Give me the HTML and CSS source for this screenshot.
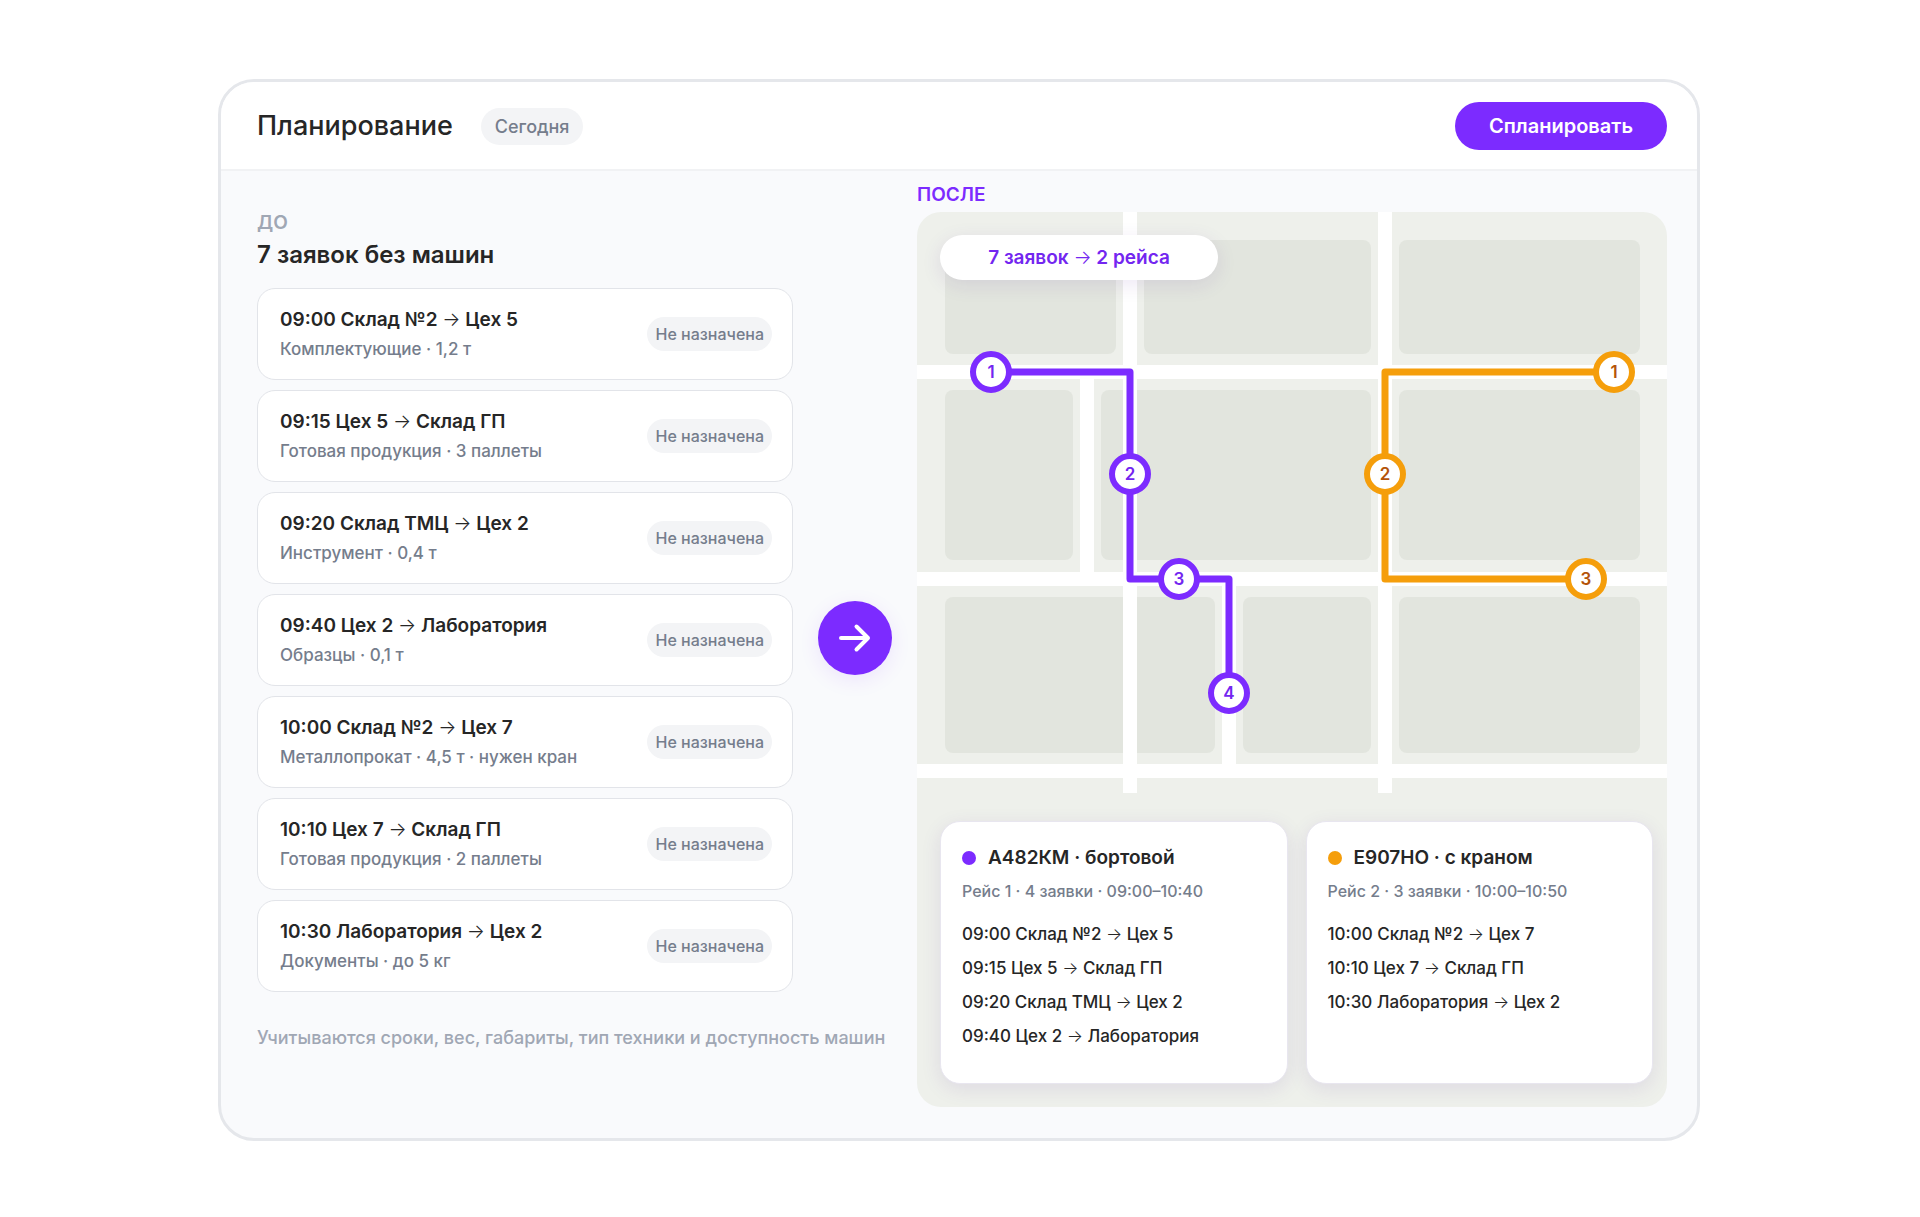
FILE: index.html
```html
<!DOCTYPE html>
<html lang="ru">
<head>
<meta charset="utf-8">
<meta name="viewport" content="width=device-width, initial-scale=1">
<title>Планирование</title>
<link rel="stylesheet" href="styles.css">
</head>
<body>
<main class="planner">
  <header class="planner-header">
    <h1 class="planner-title">Планирование</h1>
    <span class="day">Сегодня</span>
    <button class="plan-button" type="button">Спланировать</button>
  </header>

  <div class="planner-body">
    <section class="before">
      <div class="before-head">
        <p class="label">ДО</p>
        <h2 class="before-title">7 заявок без машин</h2>
      </div>
      <ul class="requests">
        <li class="request">
          <div class="request-info">
            <h3 class="request-title">09:00 Склад №2 <span class="arrow">→</span> Цех 5</h3>
            <p class="request-meta">Комплектующие · 1,2 т</p>
          </div>
          <span class="status">Не назначена</span>
        </li>
        <li class="request">
          <div class="request-info">
            <h3 class="request-title">09:15 Цех 5 <span class="arrow">→</span> Склад ГП</h3>
            <p class="request-meta">Готовая продукция · 3 паллеты</p>
          </div>
          <span class="status">Не назначена</span>
        </li>
        <li class="request">
          <div class="request-info">
            <h3 class="request-title">09:20 Склад ТМЦ <span class="arrow">→</span> Цех 2</h3>
            <p class="request-meta">Инструмент · 0,4 т</p>
          </div>
          <span class="status">Не назначена</span>
        </li>
        <li class="request">
          <div class="request-info">
            <h3 class="request-title">09:40 Цех 2 <span class="arrow">→</span> Лаборатория</h3>
            <p class="request-meta">Образцы · 0,1 т</p>
          </div>
          <span class="status">Не назначена</span>
        </li>
        <li class="request">
          <div class="request-info">
            <h3 class="request-title">10:00 Склад №2 <span class="arrow">→</span> Цех 7</h3>
            <p class="request-meta">Металлопрокат · 4,5 т · нужен кран</p>
          </div>
          <span class="status">Не назначена</span>
        </li>
        <li class="request">
          <div class="request-info">
            <h3 class="request-title">10:10 Цех 7 <span class="arrow">→</span> Склад ГП</h3>
            <p class="request-meta">Готовая продукция · 2 паллеты</p>
          </div>
          <span class="status">Не назначена</span>
        </li>
        <li class="request">
          <div class="request-info">
            <h3 class="request-title">10:30 Лаборатория <span class="arrow">→</span> Цех 2</h3>
            <p class="request-meta">Документы · до 5 кг</p>
          </div>
          <span class="status">Не назначена</span>
        </li>
      </ul>
      <div class="transition">
        <svg width="38" height="38" viewBox="0 0 38 38" fill="none" stroke="#fff" stroke-width="4" stroke-linecap="round" stroke-linejoin="round" aria-hidden="true">
          <path d="M5 19H32M20.500 7.500L32 19L20.500 30.500"/>
        </svg>
      </div>
      <p class="note">Учитываются сроки, вес, габариты, тип техники и доступность машин</p>
    </section>

    <section class="after">
      <p class="label label-accent">ПОСЛЕ</p>
      <div class="map">
        <svg class="map-canvas" viewBox="0 0 750 581" role="img" aria-label="Карта рейсов">
          <g fill="#e2e5de">
            <rect x="28" y="28" width="171" height="114" rx="8"/>
            <rect x="227" y="28" width="227" height="114" rx="8"/>
            <rect x="482" y="28" width="241" height="114" rx="8"/>
            <rect x="28" y="178" width="128" height="170" rx="8"/>
            <rect x="184" y="178" width="270" height="170" rx="8"/>
            <rect x="482" y="178" width="241" height="170" rx="8"/>
            <rect x="28" y="385" width="270" height="156" rx="8"/>
            <rect x="326" y="385" width="128" height="156" rx="8"/>
            <rect x="482" y="385" width="241" height="156" rx="8"/>
          </g>
          <g stroke="#fff" stroke-width="14">
            <path d="M0 160H750M0 367H750M0 559H750"/>
            <path d="M213 0V581M468 0V581M170 160V367M312 367V559"/>
          </g>
          <g fill="none" stroke-width="7" stroke-linejoin="round">
            <path stroke="#7c2bff" d="M74 160H213V367H312V481"/>
            <path stroke="#f59e0b" d="M697 160H468V367H669"/>
          </g>
          <g class="pins pins-violet">
            <circle cx="74" cy="160" r="18"/><text x="74" y="166">1</text>
            <circle cx="213" cy="262" r="18"/><text x="213" y="268">2</text>
            <circle cx="262" cy="367" r="18"/><text x="262" y="373">3</text>
            <circle cx="312" cy="481" r="18"/><text x="312" y="487">4</text>
          </g>
          <g class="pins pins-amber">
            <circle cx="697" cy="160" r="18"/><text x="697" y="166">1</text>
            <circle cx="468" cy="262" r="18"/><text x="468" y="268">2</text>
            <circle cx="669" cy="367" r="18"/><text x="669" y="373">3</text>
          </g>
        </svg>
        <p class="summary">7 заявок <span class="arrow">→</span> 2 рейса</p>
        <div class="trips">
          <article class="trip">
            <h3 class="trip-title"><span class="dot dot-violet"></span>А482КМ · бортовой</h3>
            <p class="trip-meta">Рейс 1 · 4 заявки · 09:00–10:40</p>
            <ul class="stops">
              <li>09:00 Склад №2 <span class="arrow">→</span> Цех 5</li>
              <li>09:15 Цех 5 <span class="arrow">→</span> Склад ГП</li>
              <li>09:20 Склад ТМЦ <span class="arrow">→</span> Цех 2</li>
              <li>09:40 Цех 2 <span class="arrow">→</span> Лаборатория</li>
            </ul>
          </article>
          <article class="trip">
            <h3 class="trip-title"><span class="dot dot-amber"></span>Е907НО · с краном</h3>
            <p class="trip-meta">Рейс 2 · 3 заявки · 10:00–10:50</p>
            <ul class="stops">
              <li>10:00 Склад №2 <span class="arrow">→</span> Цех 7</li>
              <li>10:10 Цех 7 <span class="arrow">→</span> Склад ГП</li>
              <li>10:30 Лаборатория <span class="arrow">→</span> Цех 2</li>
            </ul>
          </article>
        </div>
      </div>
    </section>
  </div>
</main>
</body>
</html>
```
FILE: styles.css
```css
*, *::before, *::after { box-sizing: border-box; }

:root {
  --ink: #262626;
  --muted: #757d8c;
  --faint: #a0a7b4;
  --line: #e5e7eb;
  --chip: #f3f4f6;
  --violet: #7c2bff;
  --amber: #f59e0b;
}

body {
  margin: 0;
  padding: 79px 26px 76px 24px;
  background: #fff;
  color: var(--ink);
  font-family: Inter, "Noto Sans", sans-serif;
  font-weight: 500;
}

h1, h2, h3, p, ul { margin: 0; padding: 0; font-weight: inherit; }
ul { list-style: none; }

.planner {
  max-width: 1482px;
  margin: 0 auto;
  border: 3px solid var(--line);
  border-radius: 36px;
  background: #f9fafc;
  overflow: hidden;
}

.planner-header {
  display: flex;
  align-items: center;
  padding: 20px 30px 19px 36px;
  border-bottom: 2px solid #f1f2f4;
  background: #fff;
}

.planner-title { font-size: 27px; line-height: 48px; }

.day {
  margin-left: 28px;
  padding: 0 14px;
  border-radius: 19px;
  background: var(--chip);
  color: var(--muted);
  font-size: 18px;
  line-height: 37px;
}

.plan-button {
  margin-left: auto;
  padding: 0 34px;
  border: 0;
  border-radius: 24px;
  background: var(--violet);
  color: #fff;
  font: 600 20px/48px Inter, "Noto Sans", sans-serif;
  cursor: pointer;
}

.planner-body {
  display: grid;
  grid-template-columns: minmax(0, 635fr) minmax(0, 750fr);
  column-gap: 25px;
  padding: 12px 30px 31px 36px;
}

.label {
  color: var(--faint);
  font-size: 19px;
  font-weight: 600;
  line-height: 24px;
}
.label-accent { margin-bottom: 5px; color: var(--violet); }

.before {
  display: grid;
  grid-template-columns: minmax(0, 1fr) 74px;
  align-content: start;
  column-gap: 25px;
  padding-top: 28px;
}

.before-head { grid-column: 1 / -1; }
.before-title { font-size: 24px; font-weight: 600; line-height: 40px; }

.requests {
  display: flex;
  flex-direction: column;
  gap: 10px;
  padding-top: 13px;
}

.request {
  display: flex;
  align-items: center;
  justify-content: space-between;
  min-height: 92px;
  padding: 0 20px 0 22px;
  border: 1px solid #e2e4e9;
  border-radius: 18px;
  background: #fff;
}

.request-title { font-size: 19px; font-weight: 600; line-height: 31px; }
.request-meta { color: var(--muted); font-size: 17px; line-height: 29px; }

.status {
  padding: 0 8px;
  border-radius: 17px;
  background: var(--chip);
  color: var(--muted);
  font-size: 16px;
  line-height: 34px;
}

.transition {
  display: grid;
  place-items: center;
  align-self: center;
  height: 74px;
  margin-top: 8px;
  border-radius: 50%;
  background: var(--violet);
  box-shadow: 0 5px 20px rgba(124, 43, 255, .1);
}

.note {
  grid-column: 1 / -1;
  padding-top: 32px;
  color: var(--faint);
  font-size: 18px;
  line-height: 28px;
  white-space: nowrap;
}

.arrow { font-weight: 300; }

.map {
  position: relative;
  border-radius: 24px;
  background: #eef0eb;
  overflow: hidden;
}

.map-canvas { display: block; width: 100%; height: auto; }

.pins circle { fill: #fff; stroke-width: 6px; }
.pins text { font-size: 17px; font-weight: 600; text-anchor: middle; }
.pins-violet circle { stroke: var(--violet); }
.pins-violet text { fill: #7326f0; }
.pins-amber circle { stroke: var(--amber); }
.pins-amber text { fill: #b45309; }

.summary {
  position: absolute;
  top: 23px;
  left: 23px;
  width: 278px;
  border-radius: 23px;
  background: #fff;
  box-shadow: 0 5px 20px rgba(76, 29, 149, .1);
  color: #7326f0;
  font-size: 19px;
  font-weight: 600;
  line-height: 45px;
  text-align: center;
}

.trips {
  display: grid;
  grid-template-columns: repeat(2, minmax(0, 1fr));
  gap: 18px;
  padding: 28px 14px 23px 23px;
}

.trip {
  padding: 19px 21px 30px;
  border: 1px solid #e8e6ef;
  border-radius: 20px;
  background: #fff;
  box-shadow: 0 5px 20px rgba(76, 29, 149, .1);
}

.trip-title {
  display: flex;
  align-items: center;
  gap: 12px;
  font-size: 19px;
  font-weight: 600;
  line-height: 34px;
}

.dot { width: 14px; height: 14px; border-radius: 50%; }
.dot-violet { background: var(--violet); }
.dot-amber { background: var(--amber); }

.trip-meta { color: var(--muted); font-size: 16px; line-height: 32px; }
.stops { padding-top: 10px; font-size: 17px; line-height: 34px; }
```
